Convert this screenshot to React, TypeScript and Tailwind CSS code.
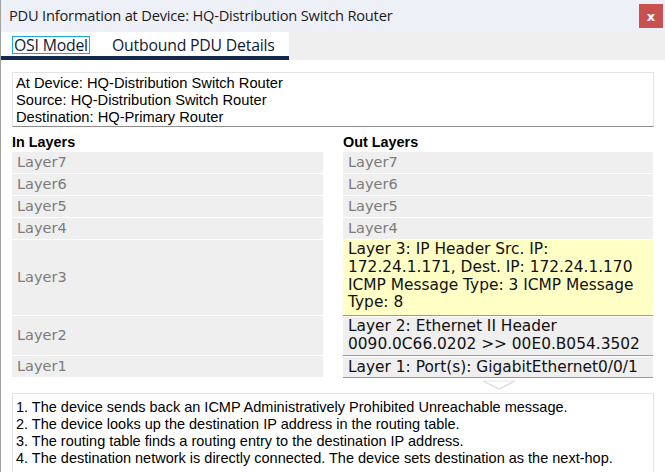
import React from "react";

const layerFont = { fontFamily: '"DejaVu Sans", Verdana, sans-serif' };

function GrayRow({ label, h }: { label: string; h: string }) {
  return (
    <div className={`bg-[#efefef] ${h} flex items-center pl-[5px] text-[14.5px] text-[#7b7b7b]`} style={layerFont}>
      {label}
    </div>
  );
}

export default function App() {
  return (
    <div className="w-[665px] h-[472px] bg-white relative overflow-hidden border-l border-[#a0a0a0]">
      {/* Title bar */}
      <div className="h-[32px] bg-[#eef0f7] flex items-center justify-between pl-[8px] pr-[2px]">
        <span className="text-[14.65px] text-[#1a1a1a] font-['Open_Sans',sans-serif] tracking-[-0.2px]">
          PDU Information at Device: HQ-Distribution Switch Router
        </span>
        <div className="w-[24px] h-[24px] bg-[#c9504f] flex items-center justify-center text-white text-[13px] font-bold font-['DejaVu_Sans',sans-serif] leading-none">
          x
        </div>
      </div>
      {/* Tab bar */}
      <div className="h-[28px] bg-[#efefef] flex">
        <div className="w-[288px] bg-white flex flex-col">
          <div className="flex-1 flex items-end pb-[2px] gap-[22px] pl-[11px] text-[15.8px] text-[#111a33] font-['Open_Sans',sans-serif] tracking-[-0.2px]">
            <span className="border border-[#1aa8d8] px-[1px] leading-[15px] h-[18px] pt-[1px]">OSI Model</span>
            <span className="leading-[15px] h-[18px] pt-[2px]">Outbound PDU Details</span>
          </div>
          <div className="h-[4px] bg-[#132a4c]" />
        </div>
      </div>
      {/* Content */}
      <div className="pl-[11px] pr-[11px] pt-[12px]">
        <div className="border border-[#e3e3e3] border-b-[#8c8c8c] h-[55px] pl-[3px] pt-[2px] text-[14.7px] leading-[17px] text-black font-['Liberation_Sans',Arial,sans-serif]">
          <div>At Device: HQ-Distribution Switch Router</div>
          <div>Source: HQ-Distribution Switch Router</div>
          <div>Destination: HQ-Primary Router</div>
        </div>
        <div className="grid grid-cols-[311px_310px] gap-x-[20px] mt-[5px]">
          <div className="flex flex-col">
            <div className="h-[20px] font-bold text-[14.4px] text-black font-['Liberation_Sans',Arial,sans-serif] leading-[20px]">In Layers</div>
            <div className="flex flex-col gap-[1px]">
              <GrayRow label="Layer7" h="h-[21px]" />
              <GrayRow label="Layer6" h="h-[21px]" />
              <GrayRow label="Layer5" h="h-[21px]" />
              <GrayRow label="Layer4" h="h-[21px]" />
              <GrayRow label="Layer3" h="h-[75px]" />
              <GrayRow label="Layer2" h="h-[39px]" />
              <GrayRow label="Layer1" h="h-[21px]" />
            </div>
          </div>
          <div className="flex flex-col">
            <div className="h-[20px] font-bold text-[14.4px] text-black font-['Liberation_Sans',Arial,sans-serif] leading-[20px]">Out Layers</div>
            <div className="flex flex-col gap-[1px]">
              <GrayRow label="Layer7" h="h-[21px]" />
              <GrayRow label="Layer6" h="h-[21px]" />
              <GrayRow label="Layer5" h="h-[21px]" />
              <GrayRow label="Layer4" h="h-[21px]" />
              <div className="h-[76px] bg-[#ffffc6] border-b border-[#9a9a9a] pl-[5px] pt-[1px] text-[15.4px] leading-[17.8px] text-[#111]" style={layerFont}>
                Layer 3: IP Header Src. IP: 172.24.1.171, Dest. IP: 172.24.1.170 ICMP Message Type: 3 ICMP Message Type: 8
              </div>
              <div className="h-[39px] bg-[#efefef] border-b border-[#9a9a9a] pl-[5px] pt-[1px] text-[15.4px] leading-[17.8px] text-[#111]" style={layerFont}>
                Layer 2: Ethernet II Header 0090.0C66.0202 &gt;&gt; 00E0.B054.3502
              </div>
              <div className="h-[21px] bg-[#efefef] border-b border-[#9a9a9a] pl-[5px] text-[15.4px] leading-[20px] text-[#111]" style={layerFont}>
                Layer 1: Port(s): GigabitEthernet0/0/1
              </div>
            </div>
            <div className="flex justify-center pl-[2px] mt-[2px]">
              <svg width="34" height="10" viewBox="0 0 34 10">
                <polyline points="1,1 17,9 33,1" fill="none" stroke="#d8d8d8" strokeWidth="1.2" />
                <line x1="1" y1="1" x2="33" y2="1" stroke="#e6e6e6" strokeWidth="1" />
              </svg>
            </div>
          </div>
        </div>
        <div className="border border-[#e3e3e3] h-[90px] mt-[3px] pl-[3px] pt-[5px] text-[14.5px] leading-[17px] text-black font-['Liberation_Sans',Arial,sans-serif]">
          <div>1. The device sends back an ICMP Administratively Prohibited Unreachable message.</div>
          <div>2. The device looks up the destination IP address in the routing table.</div>
          <div>3. The routing table finds a routing entry to the destination IP address.</div>
          <div>4. The destination network is directly connected. The device sets destination as the next-hop.</div>
        </div>
      </div>
    </div>
  );
}
